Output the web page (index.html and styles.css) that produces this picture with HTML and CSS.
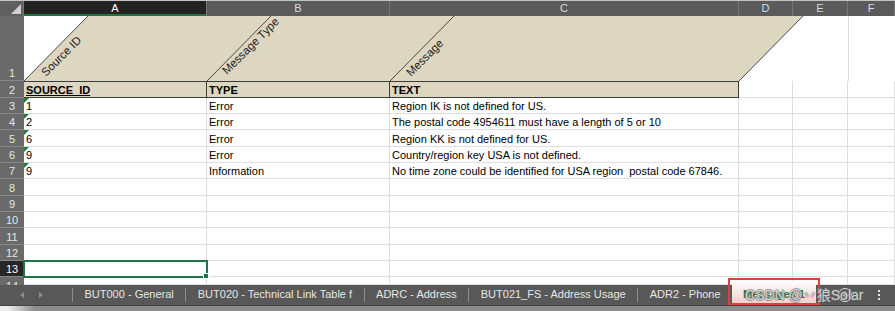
FILE: index.html
```html
<!DOCTYPE html>
<html lang="en">
<head>
    <meta charset="UTF-8">
    <meta name="viewport" content="width=device-width, initial-scale=1.0">
    <title>Messages</title>
    <link rel="stylesheet" href="styles.css">
</head>
<body>
<div class="sheet">
    <div class="grid">
        <div class="corner"></div>
        <div class="colhead on">A</div>
        <div class="colhead">B</div>
        <div class="colhead">C</div>
        <div class="colhead">D</div>
        <div class="colhead">E</div>
        <div class="colhead">F</div>

        <div class="rowhead">1</div>
        <div class="slant">
            <svg width="871" height="65" viewBox="0 0 871 65">
                <polygon points="0,65 64,0 779,0 715,65" fill="#ddd6c1"/>
                <line x1="824.5" y1="0" x2="824.5" y2="65" stroke="#dedede"/>
                <g stroke="#4a4a4a" stroke-width="1">
                    <line x1="0" y1="65" x2="64" y2="0"/>
                    <line x1="183" y1="65" x2="247" y2="0"/>
                    <line x1="366" y1="65" x2="430" y2="0"/>
                    <line x1="715" y1="65" x2="779" y2="0"/>
                </g>
                <g class="rot">
                    <text transform="translate(22 61) rotate(-45)">Source ID</text>
                    <text transform="translate(203 59) rotate(-45)">Message Type</text>
                    <text transform="translate(387 61) rotate(-45)">Message</text>
                </g>
            </svg>
        </div>

        <div class="rowhead">2</div>
        <div class="cell hd"><u>SOURCE_ID</u></div>
        <div class="cell hd">TYPE</div>
        <div class="cell hd">TEXT</div>
        <div class="cell"></div><div class="cell"></div><div class="cell"></div>

        <div class="rowhead">3</div>
        <div class="cell flag">1</div>
        <div class="cell">Error</div>
        <div class="cell">Region IK is not defined for US.</div>
        <div class="cell"></div><div class="cell"></div><div class="cell"></div>

        <div class="rowhead">4</div>
        <div class="cell flag">2</div>
        <div class="cell">Error</div>
        <div class="cell">The postal code 4954611 must have a length of 5 or 10</div>
        <div class="cell"></div><div class="cell"></div><div class="cell"></div>

        <div class="rowhead">5</div>
        <div class="cell flag">6</div>
        <div class="cell">Error</div>
        <div class="cell">Region KK is not defined for US.</div>
        <div class="cell"></div><div class="cell"></div><div class="cell"></div>

        <div class="rowhead">6</div>
        <div class="cell flag">9</div>
        <div class="cell">Error</div>
        <div class="cell">Country/region key USA is not defined.</div>
        <div class="cell"></div><div class="cell"></div><div class="cell"></div>

        <div class="rowhead">7</div>
        <div class="cell flag">9</div>
        <div class="cell">Information</div>
        <div class="cell">No time zone could be identified for USA region  postal code 67846.</div>
        <div class="cell"></div><div class="cell"></div><div class="cell"></div>

        <div class="rowhead">8</div>
        <div class="cell"></div><div class="cell"></div><div class="cell"></div>
        <div class="cell"></div><div class="cell"></div><div class="cell"></div>

        <div class="rowhead">9</div>
        <div class="cell"></div><div class="cell"></div><div class="cell"></div>
        <div class="cell"></div><div class="cell"></div><div class="cell"></div>

        <div class="rowhead">10</div>
        <div class="cell"></div><div class="cell"></div><div class="cell"></div>
        <div class="cell"></div><div class="cell"></div><div class="cell"></div>

        <div class="rowhead">11</div>
        <div class="cell"></div><div class="cell"></div><div class="cell"></div>
        <div class="cell"></div><div class="cell"></div><div class="cell"></div>

        <div class="rowhead">12</div>
        <div class="cell"></div><div class="cell"></div><div class="cell"></div>
        <div class="cell"></div><div class="cell"></div><div class="cell"></div>

        <div class="rowhead on">13</div>
        <div class="cell pick"></div><div class="cell"></div><div class="cell"></div>
        <div class="cell"></div><div class="cell"></div><div class="cell"></div>

        <div class="rowhead cut">14</div>
        <div class="cell"></div><div class="cell"></div><div class="cell"></div>
        <div class="cell"></div><div class="cell"></div><div class="cell"></div>
    </div>

    <div class="tabs">
        <div class="nav"><i class="arrow left"></i><i class="arrow right"></i></div>
        <i class="sep"></i>
        <div class="tab">BUT000 - General</div>
        <i class="sep"></i>
        <div class="tab">BUT020 - Technical Link Table f</div>
        <i class="sep"></i>
        <div class="tab">ADRC - Address</div>
        <i class="sep"></i>
        <div class="tab">BUT021_FS - Address Usage</div>
        <i class="sep"></i>
        <div class="tab">ADR2 - Phone</div>
        <div class="tab active">Messages 1</div>
        <div class="add"></div>
        <div class="more"><b></b><b></b><b></b></div>
        <span class="mark">CSDN @丷狼Solar</span>
    </div>
    <div class="foot"></div>
</div>
</body>
</html>
```

FILE: styles.css
```css
body {
  margin: 0;
  font-family: "Liberation Sans", Arial, sans-serif;
  font-size: 11px;
  background-color: #fff;
  overflow: hidden;
}

.sheet {
  width: 895px;
  height: 311px;
  border-top: 1px solid #c4c4c4;
  box-sizing: border-box;
  display: flex;
  flex-direction: column;
  overflow: hidden;
}

.grid {
  display: grid;
  grid-template-columns: 24px 183px 183px 349px 54px 55px 47px;
  grid-template-rows: 15px 65px 17px 16px 16px 17px 16px 16px 17px 16px 16px 17px 16px 16px 8px;
}

/* headers */
.corner {
  background-color: #606060;
  position: relative;
  border-right: 1px solid #777;
}

.corner::after {
  content: "";
  position: absolute;
  right: 2px;
  bottom: 2px;
  border-left: 10px solid transparent;
  border-bottom: 10px solid #d0d0d0;
}

.colhead {
  background-color: #5b5b5b;
  color: #dcdcdc;
  text-align: center;
  line-height: 15px;
  border-right: 1px solid #777;
  box-sizing: border-box;
}

.colhead.on {
  background-color: #232323;
  color: #fff;
  box-shadow: inset 0 -2px #217346;
}

.rowhead {
  background-color: #6a6a6a;
  color: #e6e6e6;
  border-bottom: 1px solid #888;
  box-sizing: border-box;
  display: flex;
  align-items: flex-end;
  justify-content: center;
  line-height: 14px;
}

.rowhead.on {
  background-color: #262626;
  color: #fff;
}

.rowhead.cut {
  align-items: flex-start;
  overflow: hidden;
  padding-top: 2px;
  border-bottom: none;
}

/* row 1 slanted captions */
.slant {
  grid-column: 2 / 8;
  overflow: hidden;
}

.slant svg {
  display: block;
}

.rot text {
  font-family: "Liberation Sans", Arial, sans-serif;
  font-size: 11.5px;
  fill: #222;
}

/* cells */
.cell {
  border-right: 1px solid #dedede;
  border-bottom: 1px solid #dedede;
  box-sizing: border-box;
  padding: 0 2px;
  display: flex;
  align-items: flex-end;
  line-height: 14px;
  white-space: pre;
  color: #000;
  position: relative;
}

.cell.hd {
  background-color: #ddd6c1;
  font-weight: bold;
  border-top: 1px solid #3c3c3c;
  border-bottom: 1px solid #3c3c3c;
  border-right: 1px solid #3c3c3c;
}

.cell.flag::before {
  content: "";
  position: absolute;
  left: 0;
  top: 0;
  border-top: 5px solid #1f7a3c;
  border-right: 5px solid transparent;
}

.cell.pick {
  outline: 2px solid #217346;
  outline-offset: -1px;
  z-index: 1;
}

.cell.pick::after {
  content: "";
  position: absolute;
  right: -3px;
  bottom: -3px;
  width: 4px;
  height: 4px;
  background-color: #217346;
  border: 1px solid #fff;
}

/* sheet tabs */
.tabs {
  height: 20px;
  flex-shrink: 0;
  background-color: #585858;
  color: #e6e6e6;
  display: flex;
  align-items: stretch;
  position: relative;
}

.nav {
  width: 72px;
  flex-shrink: 0;
  display: flex;
  align-items: center;
  gap: 15px;
  padding-left: 20px;
  box-sizing: border-box;
}

.arrow {
  width: 0;
  height: 0;
  border-top: 3px solid transparent;
  border-bottom: 3px solid transparent;
}

.arrow.left {
  border-right: 4px solid #8e8e8e;
}

.arrow.right {
  border-left: 4px solid #8e8e8e;
}

.sep {
  width: 1px;
  height: 14px;
  align-self: center;
  background-color: #8c8c8c;
  flex-shrink: 0;
}

.tab {
  padding: 0 11.5px 2px;
  line-height: 18px;
  white-space: nowrap;
  flex-shrink: 0;
}

.tab.active {
  margin-top: -4px;
  padding: 4px 11px 2px;
  background: linear-gradient(#fdfdfd, #f4caca);
  color: #217346;
  font-weight: bold;
  box-shadow: inset 0 -2px #217346;
  position: relative;
}

.tab.active::after {
  content: "";
  position: absolute;
  top: -3px;
  left: -4px;
  right: -4px;
  bottom: 0;
  border: 2px solid #e53c3c;
}

.add {
  width: 12px;
  height: 12px;
  margin-left: 22px;
  align-self: center;
  border: 1px solid #e0e0e0;
  border-radius: 50%;
  position: relative;
  flex-shrink: 0;
}

.add::before,
.add::after {
  content: "";
  position: absolute;
  background-color: #e0e0e0;
  left: 50%;
  top: 50%;
  transform: translate(-50%, -50%);
}

.add::before {
  width: 8px;
  height: 1px;
}

.add::after {
  width: 1px;
  height: 8px;
}

.more {
  margin-left: 26px;
  display: flex;
  flex-direction: column;
  justify-content: center;
  gap: 2px;
  flex-shrink: 0;
}

.more b {
  width: 2px;
  height: 2px;
  background-color: #e6e6e6;
}

.mark {
  position: absolute;
  left: 745px;
  top: 2px;
  font-size: 14px;
  line-height: 16px;
  white-space: nowrap;
  color: rgba(235, 235, 235, 0.8);
  text-shadow: 1px 0 rgba(110, 110, 110, 0.6), -1px 0 rgba(110, 110, 110, 0.6),
               0 1px rgba(110, 110, 110, 0.6), 0 -1px rgba(110, 110, 110, 0.6);
  font-family: "Liberation Sans", "Noto Sans CJK SC", sans-serif;
}

.foot {
  flex: 1;
  background: linear-gradient(to right, #eee 0, #eee 8px, #8d8d8d 35px);
  border-top: 1px solid #444;
}
```
